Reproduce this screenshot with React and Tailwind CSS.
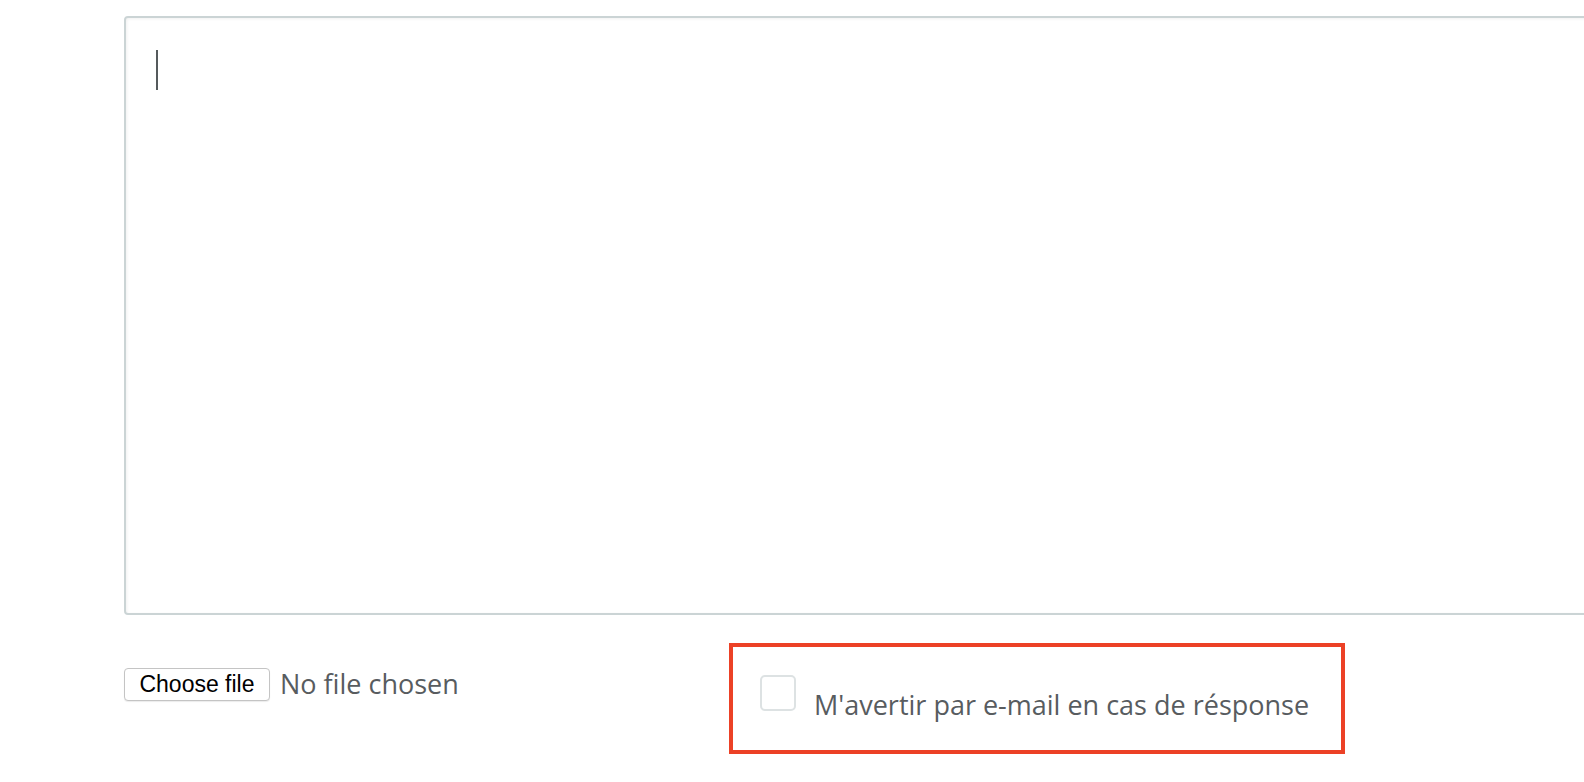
import React from 'react';

function App() {
  return (
    <div className="min-h-[782px] w-[1584px] overflow-hidden bg-white">
      <div className="pl-[124px] pt-[16px]">
        {/* message body */}
        <div className="relative h-[599px] w-[1500px] rounded-[4px] border-2 border-[#cbd4d5] bg-white shadow-[inset_1px_1px_3px_rgba(0,0,0,0.06)]">
          <span className="absolute left-[30px] top-[32px] h-[40px] w-[2px] bg-[#555a5c]" />
        </div>

        <div className="mt-[28px] flex items-start">
          <div className="flex w-[605px] items-center pt-[23px]">
            <button
              type="button"
              className="h-[33px] w-[146px] rounded-[4px] border border-[#c4c4c4] bg-white text-[23px] leading-none text-black shadow-[0_1px_1px_rgba(0,0,0,0.08)]"
              style={{ fontFamily: '"Liberation Sans", Arial, sans-serif' }}
            >
              Choose file
            </button>
            <span
              className="ml-[10px] text-[27px] leading-[36px] text-[#585c5f]"
              style={{ fontFamily: '"Open Sans", sans-serif' }}
            >
              No file chosen
            </span>
          </div>

          <label className="flex h-[111px] w-[616px] items-start border-4 border-[#ec4126] pl-[27px] pt-[28px]">
            <span className="block h-[36px] w-[36px] shrink-0 rounded-[5px] border-2 border-[#dde2e3] bg-white" />
            <span
              className="ml-[18px] mt-[12px] text-[27px] leading-[36px] text-[#585c5f]"
              style={{ fontFamily: '"Open Sans", sans-serif' }}
            >
              M'avertir par e-mail en cas de résponse
            </span>
          </label>
        </div>
      </div>
    </div>
  );
}

export default App;
